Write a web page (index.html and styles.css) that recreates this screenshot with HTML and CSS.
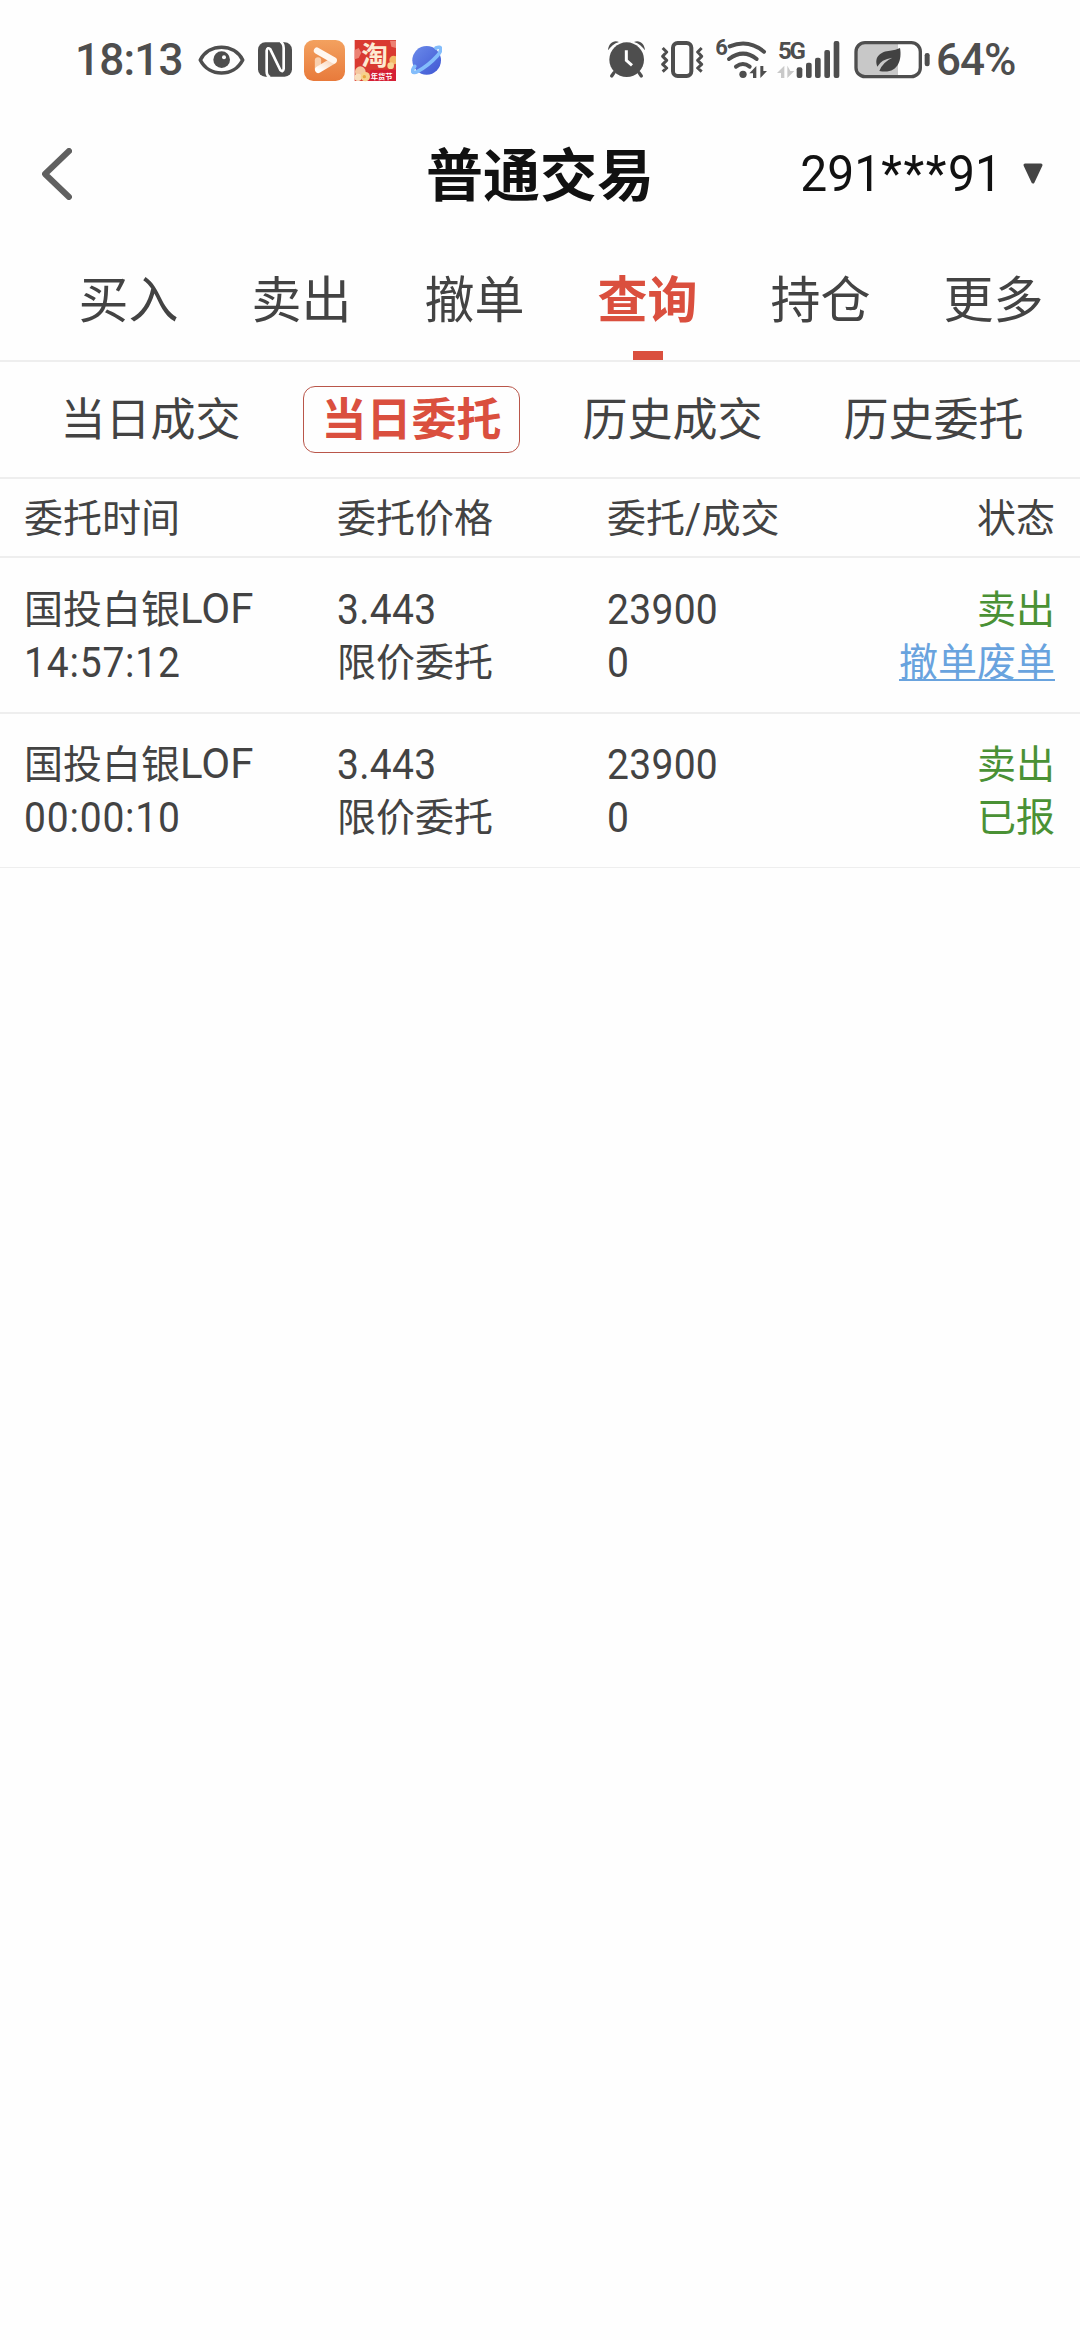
FILE: index.html
```html
<!DOCTYPE html>
<html lang="zh-CN">
<head>
    <meta charset="UTF-8">
    <meta name="viewport" content="width=device-width, initial-scale=1.0">
    <title>普通交易</title>
    <link rel="stylesheet" href="styles.css">
</head>
<body>

    <div class="status-bar">
        <div class="status-left">
            <span class="status-text clock">18:13</span>
            <!-- eye -->
            <svg class="eye" width="47" height="80" viewBox="414 0 141 240">
                <path d="M421 120C447 69 522 69 548 120C522 172 447 172 421 120Z" fill="none" stroke="#4e4e4e" stroke-width="11" stroke-linejoin="round"/>
                <circle cx="485" cy="119" r="25" fill="#4e4e4e"/>
                <circle cx="492" cy="112" r="6" fill="#fff"/>
            </svg>
            <!-- nfc -->
            <svg class="nfc" width="34" height="80" viewBox="24 0 102 240">
                <rect x="24" y="67" width="102" height="103" rx="22" fill="#4e4e4e"/>
                <path d="M60 172Q50 168 50 154V92Q52 80 61 88L91 150Q99 158 101 146V84Q101 70 91 65" fill="none" stroke="#fff" stroke-width="8"/>
            </svg>
            <!-- video app -->
            <svg class="video" width="41" height="80" viewBox="162 0 123 240">
                <defs>
                    <linearGradient id="orange" x1="0" y1="0" x2="0" y2="1">
                        <stop offset="0" stop-color="#f3a15f"/>
                        <stop offset="1" stop-color="#e87a3b"/>
                    </linearGradient>
                    <linearGradient id="fold" x1="0" y1="1" x2="1" y2="0">
                        <stop offset="0" stop-color="#fff"/>
                        <stop offset="1" stop-color="#f9d3b5"/>
                    </linearGradient>
                </defs>
                <rect x="162" y="60" width="123" height="123" rx="28" fill="url(#orange)"/>
                <path d="M204 121V145" stroke="#f9cfae" stroke-width="19" stroke-linecap="round"/>
                <path d="M205 149L250 122" stroke="url(#fold)" stroke-width="20" stroke-linecap="round"/>
                <path d="M201 92L251 121" stroke="#fff7f0" stroke-width="19" stroke-linecap="round"/>
            </svg>
            <!-- taobao -->
            <svg class="taobao" width="42" height="80" viewBox="312 0 126 240">
                <rect x="314" y="60" width="124" height="123" fill="#d93a31"/>
                <path d="M314 90l12-6 8 14-8 16-12 4zM420 62h18v22l-14-4z" fill="#ec8173"/>
                <circle cx="431" cy="120" r="13" fill="#f3b967"/>
                <circle cx="422" cy="137" r="10" fill="#f7d594"/>
                <path d="M362 149H438V183H350Z" fill="#d51f35"/>
                <circle cx="331" cy="155" r="16" fill="#f5c8a0"/>
                <circle cx="324" cy="172" r="11" fill="#f8dfbd"/>
                <circle cx="346" cy="170" r="14" fill="#f6d18c"/>
                <circle cx="343" cy="170" r="5" fill="#e9a63f"/>
                <text class="tao-name" x="334" y="135">淘</text>
                <text class="tao-tag" x="362" y="176">年货节</text>
            </svg>
            <!-- browser -->
            <svg class="planet" width="31" height="80" viewBox="483 0 93 240">
                <defs>
                    <linearGradient id="blue" x1="0" y1="0" x2="1" y2="1">
                        <stop offset="0" stop-color="#6b8bea"/>
                        <stop offset="1" stop-color="#3f57d3"/>
                    </linearGradient>
                </defs>
                <circle cx="530" cy="121" r="43" fill="url(#blue)"/>
                <path d="M558 84C575 76 577 91 562 107C545 126 521 144 503 154C487 163 483 154 494 139" fill="none" stroke="#83bdfb" stroke-width="11" stroke-linecap="round"/>
            </svg>
        </div>
        <div class="status-right">
            <!-- alarm -->
            <svg class="alarm" width="37" height="80" viewBox="54 0 111 240">
                <path d="M72 158L65 168M147 158L154 168" stroke="#4e4e4e" stroke-width="10" stroke-linecap="round"/>
                <circle cx="110" cy="119" r="52" fill="#4e4e4e"/>
                <path d="M54 91C55 70 72 58 87 66C73 70 62 80 54 91ZM165 91C164 70 147 58 132 66C146 70 157 80 165 91Z" fill="#4e4e4e"/>
                <path d="M109 91V121L126 136" fill="none" stroke="#fff" stroke-width="9"/>
            </svg>
            <!-- vibrate -->
            <svg class="vibrate" width="43" height="80" viewBox="213 0 129 240" fill="none" stroke="#4e4e4e">
                <rect x="249" y="69" width="55" height="99" rx="14" stroke-width="12"/>
                <path d="M218 84L230 96L218 109L230 121L218 133L230 144L218 155M335 84L323 96L335 109L323 121L335 133L323 144L335 155" stroke-width="9" stroke-linejoin="round"/>
            </svg>
            <!-- wifi -->
            <svg class="wifi" width="51" height="80" viewBox="378 0 153 240">
                <text class="wifi-gen" x="376" y="105">6</text>
                <g fill="none" stroke="#4e4e4e" stroke-width="12" stroke-linecap="round">
                    <path d="M419 79Q475 56 522 95"/>
                    <path d="M417 117Q460 85 500 117"/>
                    <path d="M438 140Q459 124 479 140"/>
                </g>
                <circle cx="459" cy="163" r="11" fill="#4e4e4e"/>
                <path d="M478 160L499 138V174H489V160ZM511 174V138H520V153H531Z" fill="#4e4e4e"/>
            </svg>
            <!-- mobile signal -->
            <svg class="signal" width="63" height="80" viewBox="561 0 189 240">
                <text class="net-type" x="564" y="116">5G</text>
                <path d="M561 159L583 137V174H573V159ZM592 174V137L601 153H613Z" fill="#c9c9c9"/>
                <g fill="#4e4e4e">
                    <rect x="620" y="142" width="17" height="32" rx="6"/>
                    <rect x="648" y="128" width="17" height="46" rx="6"/>
                    <rect x="675" y="113" width="17" height="61" rx="6"/>
                    <rect x="703" y="90" width="17" height="84" rx="6"/>
                    <rect x="731" y="63" width="17" height="111" rx="6"/>
                </g>
            </svg>
            <!-- battery -->
            <svg class="battery" width="77" height="80" viewBox="42 0 231 240">
                <path d="M72 70H174V168H72Q49 168 49 146V92Q49 70 72 70Z" fill="#c8c8c8"/>
                <rect x="48" y="68" width="193" height="102" rx="27" fill="none" stroke="#4e4e4e" stroke-width="10"/>
                <rect x="254" y="99" width="15" height="40" rx="7" fill="#4e4e4e"/>
                <path d="M180 84C187 122 172 164 118 153Q127 127 157 113Q123 118 112 140C101 109 123 94 150 92Q168 91 180 84Z" fill="#424242"/>
            </svg>
            <span class="status-text percent">64%</span>
        </div>
    </div>

    <div class="header">
        <svg class="back" width="30" height="52" viewBox="0 0 30 52">
            <path d="M27 3L3 26L27 49" fill="none" stroke="#606060" stroke-width="6" stroke-linecap="round" stroke-linejoin="round"/>
        </svg>
        <h1 class="title">普通交易</h1>
        <div class="account">
            <span class="num account-no">291<span class="mask">***</span>91</span>
            <svg width="22" height="22" viewBox="0 0 22 22">
                <path d="M3 2H19L11 19Z" fill="#444" stroke="#444" stroke-width="3" stroke-linejoin="round"/>
            </svg>
        </div>
    </div>

    <div class="tabs">
        <div class="tab">买入</div>
        <div class="tab">卖出</div>
        <div class="tab">撤单</div>
        <div class="tab active">查询</div>
        <div class="tab">持仓</div>
        <div class="tab">更多</div>
    </div>

    <div class="sub-tabs">
        <div class="sub-tab"><span>当日成交</span></div>
        <div class="sub-tab active"><span>当日委托</span></div>
        <div class="sub-tab"><span>历史成交</span></div>
        <div class="sub-tab"><span>历史委托</span></div>
    </div>

    <div class="row head">
        <div>委托时间</div>
        <div>委托价格</div>
        <div>委托<span class="num">/</span>成交</div>
        <div class="state">状态</div>
    </div>

    <div class="row">
        <div>国投白银<span class="en">LOF</span><br><span class="num time">14:57:12</span></div>
        <div><span class="num">3.443</span><br>限价委托</div>
        <div><span class="num">23900</span><br><span class="num">0</span></div>
        <div class="state sell">卖出<br><a class="link">撤单废单</a></div>
    </div>

    <div class="row last">
        <div>国投白银<span class="en">LOF</span><br><span class="num time">00:00:10</span></div>
        <div><span class="num">3.443</span><br>限价委托</div>
        <div><span class="num">23900</span><br><span class="num">0</span></div>
        <div class="state sell">卖出<br>已报</div>
    </div>

</body>
</html>
```
FILE: styles.css
```css
body {
    margin: 0;
    background-color: #fefefe;
    color: #434343;
    font-family: "Noto Sans CJK SC", sans-serif;
}

svg {
    display: block;
    flex: none;
}

/* status bar */
.status-bar {
    display: flex;
    justify-content: space-between;
    height: 100px;
    padding: 20px 64px 0 75px;
    box-sizing: border-box;
}

.status-left, .status-right {
    display: flex;
    height: 80px;
}

.status-text {
    font-family: Roboto, sans-serif;
    font-size: 44px;
    font-weight: 500;
    line-height: 80px;
    color: #4e4e4e;
    white-space: nowrap;
}

.clock {
    width: 123px;
    letter-spacing: -0.8px;
}

.percent {
    width: 80px;
    margin-left: 5px;
    letter-spacing: -1px;
}

.nfc {
    margin-left: 13px;
}

.video {
    margin-left: 12px;
}

.taobao {
    margin-left: 9px;
}

.planet {
    margin-left: 15px;
}

.vibrate {
    margin-left: 16px;
}

.wifi {
    margin-left: 12px;
}

.signal {
    margin-left: 10px;
}

.battery {
    margin-left: 14px;
}

.tao-name {
    font-size: 80px;
    font-weight: bold;
    fill: #fdebd2;
}

.tao-tag {
    font-size: 22px;
    font-weight: bold;
    fill: #fff;
}

.wifi-gen, .net-type {
    font-family: Roboto, sans-serif;
    font-size: 66px;
    font-weight: bold;
    fill: #4e4e4e;
}

.net-type {
    font-size: 72px;
    letter-spacing: -7px;
}

/* header */
.header {
    display: grid;
    grid-template-columns: 1fr auto 1fr;
    align-items: center;
    height: 148px;
    padding: 0 36px;
}

.back {
    margin-left: 6px;
}

.title {
    margin: 0;
    padding-bottom: 7px;
    font-size: 57px;
    font-weight: bold;
    line-height: 80px;
    color: #111;
}

.account {
    display: flex;
    align-items: center;
    justify-content: flex-end;
    gap: 20px;
    color: #111;
}

.num {
    display: inline-block;
    font-family: Roboto, sans-serif;
    line-height: 1;
    letter-spacing: 0.3px;
    transform: scaleY(1.07);
}

.en {
    font-family: Roboto, sans-serif;
    font-size: 42px;
    line-height: 1;
}

.account-no {
    font-size: 48px;
    letter-spacing: 0;
    transform: scaleY(1.04);
}

.mask {
    letter-spacing: 1.6px;
}

/* main tabs */
.tabs {
    display: flex;
    height: 112px;
    padding-left: 42px;
    border-bottom: 2px solid #eee;
}

.tab {
    display: flex;
    flex: 1;
    flex-direction: column;
    justify-content: space-between;
    align-items: center;
    font-size: 50px;
    line-height: 96px;
}

.tab.active {
    color: #da4f3e;
    font-weight: bold;
}

.tab.active::after {
    content: "";
    width: 30px;
    height: 9px;
    background-color: #da4f3e;
}

/* sub tabs */
.sub-tabs {
    display: flex;
    align-items: center;
    height: 117px;
    padding: 0 16px 0 20px;
    box-sizing: border-box;
    border-bottom: 2px solid #eee;
}

.sub-tab {
    display: flex;
    flex: 1;
    justify-content: center;
    font-size: 45px;
}

.sub-tab span {
    padding: 0 17px 5px;
    line-height: 60px;
    border: 1px solid transparent;
    border-radius: 12px;
}

.sub-tab.active {
    color: #da4f3e;
    font-weight: bold;
}

.sub-tab.active span {
    border-color: #b9564a;
}

/* orders */
.row {
    display: grid;
    grid-template-columns: 313px 270px 1fr 200px;
    height: 156px;
    padding: 22px 25px 0 24px;
    box-sizing: border-box;
    border-bottom: 2px solid #eee;
    font-size: 39px;
    line-height: 53px;
}

.row.head {
    height: 79px;
    padding-top: 10px;
}

.row.last {
    height: 154px;
    padding-top: 21px;
    border-bottom-width: 1px;
}

.time {
    letter-spacing: 0.8px;
}

.state {
    text-align: right;
}

.sell {
    color: #4a9135;
}

.link {
    color: #69a3de;
    text-decoration: underline;
    text-decoration-thickness: 2px;
    text-underline-offset: 3px;
}
```
